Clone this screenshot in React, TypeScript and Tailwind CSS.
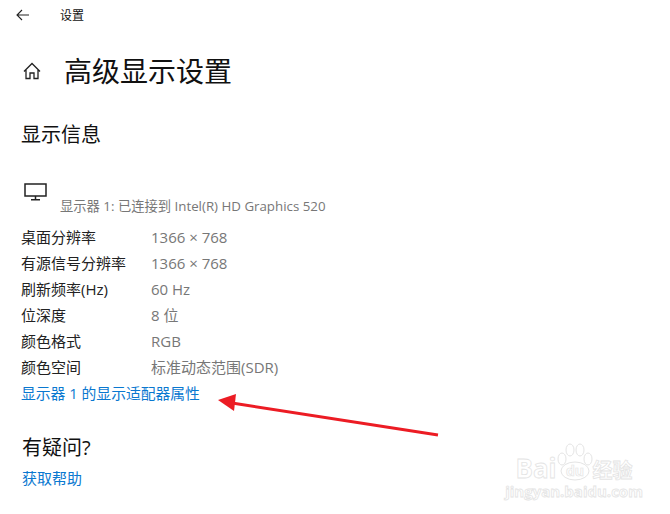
const rows = [
  ["桌面分辨率", "1366 × 768"],
  ["有源信号分辨率", "1366 × 768"],
  ["刷新频率(Hz)", "60 Hz"],
  ["位深度", "8 位"],
  ["颜色格式", "RGB"],
  ["颜色空间", "标准动态范围(SDR)"],
];

export default function App() {
  return (
    <div className="relative h-[514px] w-[670px] overflow-hidden bg-white font-['Open_Sans','Noto_Sans_CJK_SC',sans-serif] text-[#111]">
      <header className="flex h-8 items-center pl-4">
        <svg width="14" height="12" viewBox="0 0 14 12" fill="none" stroke="#222" strokeWidth="1.1" className="mb-[2px]">
          <path d="M13 6H1M6 1 1 6l5 5" />
        </svg>
        <span className="ml-[30px] text-xs">设置</span>
      </header>
      <div className="mt-[18px] flex h-[42px] items-center pl-[23px]">
        <svg width="18" height="18" viewBox="0 0 18 18" fill="none" stroke="#222" strokeWidth="1.3">
          <path d="M1 9.5 9 1.5l8 8M3 7.5V16.5h4V11h4v5.5h4V7.5" />
        </svg>
        <h1 className="ml-[23px] text-[28px] leading-none font-normal">高级显示设置</h1>
      </div>
      <h2 className="mt-[29px] pl-[21px] text-xl leading-7 font-normal">显示信息</h2>
      <div className="mt-[34px] flex items-start pl-6">
        <svg width="23" height="18" viewBox="0 0 23 18" fill="none" stroke="#222" strokeWidth="1.5" className="shrink-0">
          <path d="M1 1h21v12H1zM11.5 13v3.5M7 16.75h9" />
        </svg>
        <span className="mt-[14px] ml-[13px] text-[13.3px] leading-[18px] text-[#777]">显示器 1: 已连接到 Intel(R) HD Graphics 520</span>
      </div>
      <div className="mt-[9px] pl-[21px]">
        {rows.map(([label, value]) => (
          <div key={label} className="flex h-[26px] items-center text-[15px]">
            <span className="w-[130px] text-[#222]">{label}</span>
            <span className="text-[#777]">{value}</span>
          </div>
        ))}
        <a className="flex h-[26px] items-center text-[14.8px] text-[#0a78d0]">显示器 1 的显示适配器属性</a>
      </div>
      <h2 className="mt-[28px] pl-[22px] text-xl leading-7 font-normal">有疑问?</h2>
      <a className="mt-[4px] block pl-[22px] text-[15px] leading-6 text-[#0a78d0]">获取帮助</a>

      <svg className="absolute top-[390px] left-[215px]" width="228" height="50" viewBox="215 390 228 50" fill="none">
        <path d="M232 403 438 435" stroke="#ec1c24" strokeWidth="3" />
        <path d="M218 400 236 394 234 411Z" fill="#ec1c24" />
      </svg>

      <div className="pointer-events-none absolute top-[441px] left-[513px] flex w-[122px] flex-col items-center text-white [-webkit-text-stroke:0.8px_#e4e4e4]">
        <div className="flex h-[40px] items-end leading-none">
          <span className="text-[26px] font-bold">Bai</span>
          <svg width="36" height="38" viewBox="0 0 36 38" fill="none" stroke="#e4e4e4" strokeWidth="1">
            <ellipse cx="18" cy="28" rx="14" ry="9" />
            <ellipse cx="5" cy="16" rx="4" ry="6" />
            <ellipse cx="13" cy="7" rx="4" ry="6" />
            <ellipse cx="23" cy="7" rx="4" ry="6" />
            <ellipse cx="31" cy="16" rx="4" ry="6" />
            <text x="18" y="33" textAnchor="middle" fontSize="14" fontWeight="700" fill="#fff" strokeWidth="0.7">du</text>
          </svg>
          <span className="text-[20px] font-bold">经验</span>
        </div>
        <span className="mt-[1px] text-[15px] leading-[18px] font-bold whitespace-nowrap">jingyan.baidu.com</span>
      </div>
    </div>
  );
}
